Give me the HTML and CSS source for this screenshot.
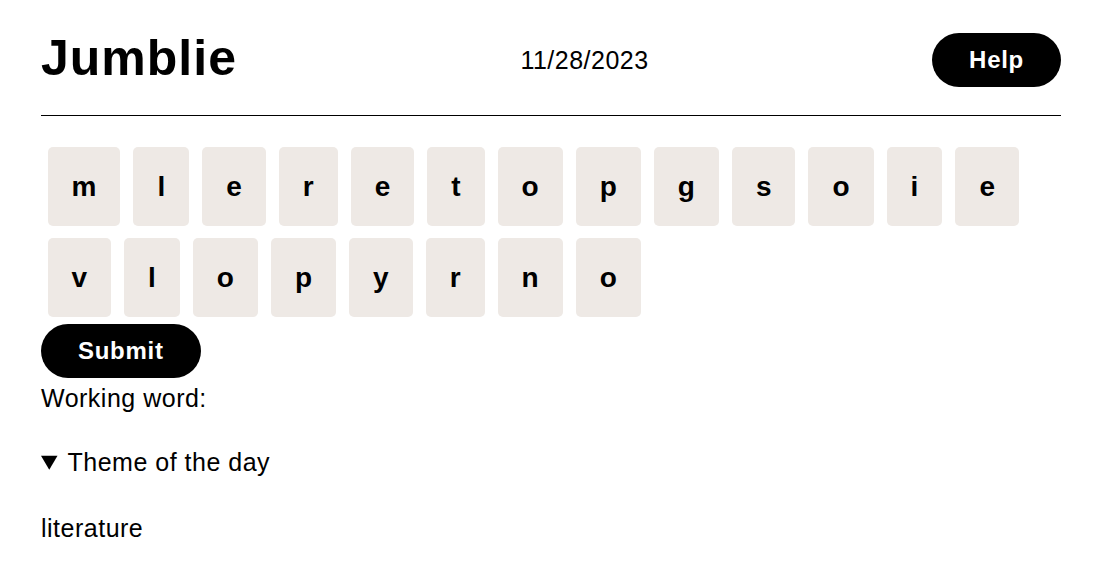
FILE: index.html
```html
<!DOCTYPE html>
<html lang="en">
<head>
<meta charset="utf-8">
<title>Jumblie</title>
<link rel="stylesheet" href="styles.css">
</head>
<body>
<div class="page">
  <header class="header">
    <h1 class="title">Jumblie</h1>
    <div class="date">11/28/2023</div>
    <button class="pill-btn" type="button">Help</button>
  </header>
  <main class="main">
    <div class="tiles">
      <button class="tile" type="button">m</button>
      <button class="tile" type="button">l</button>
      <button class="tile" type="button">e</button>
      <button class="tile" type="button">r</button>
      <button class="tile" type="button">e</button>
      <button class="tile" type="button">t</button>
      <button class="tile" type="button">o</button>
      <button class="tile" type="button">p</button>
      <button class="tile" type="button">g</button>
      <button class="tile" type="button">s</button>
      <button class="tile" type="button">o</button>
      <button class="tile" type="button">i</button>
      <button class="tile" type="button">e</button>
      <button class="tile" type="button">v</button>
      <button class="tile" type="button">l</button>
      <button class="tile" type="button">o</button>
      <button class="tile" type="button">p</button>
      <button class="tile" type="button">y</button>
      <button class="tile" type="button">r</button>
      <button class="tile" type="button">n</button>
      <button class="tile" type="button">o</button>
    </div>
    <button class="pill-btn submit" type="button">Submit</button>
    <div class="working">Working word:</div>
    <details class="theme" open>
      <summary class="theme-summary">Theme of the day</summary>
      <p class="theme-text">literature</p>
    </details>
  </main>
</div>
</body>
</html>
```

FILE: styles.css
```css
html, body {
  margin: 0;
  padding: 0;
  background: #ffffff;
}

body {
  font-family: "Liberation Sans", Arial, Helvetica, sans-serif;
  color: #000000;
  font-size: 25px;
  line-height: 1.44;
}

.page {
  padding: 0 41px;
}

.header {
  display: flex;
  justify-content: space-between;
  align-items: center;
  padding: 31px 0 26px;
  border-bottom: 1px solid #000000;
}

.title {
  margin: 0 0 3px;
  font-size: 50px;
  font-weight: 700;
  line-height: 1.1;
  letter-spacing: 0.02em;
}

.date {
  font-size: 25px;
  line-height: 1.15;
  letter-spacing: 0.02em;
}

.pill-btn {
  font-family: inherit;
  font-size: 24px;
  font-weight: 700;
  line-height: 28px;
  letter-spacing: 0.03em;
  color: #ffffff;
  background: #000000;
  border: none;
  border-radius: 27px;
  padding: 13px 37px;
  margin: 0;
  cursor: pointer;
}

.main {
  padding-top: 25px;
}

.tiles {
  display: flex;
  flex-wrap: wrap;
}

.tile {
  font-family: inherit;
  font-size: 28px;
  font-weight: 700;
  line-height: 32px;
  color: #000000;
  background: #eee9e5;
  border: none;
  border-radius: 5px;
  padding: 23.5px 24px;
  margin: 6px 6.5px;
  cursor: pointer;
}

.submit {
  display: block;
  margin-top: 1px;
}

.working {
  line-height: 36px;
  margin: 2px 0 28px;
  letter-spacing: 0.02em;
}

.theme {
  margin: 0;
  letter-spacing: 0.02em;
}

.theme-summary {
  line-height: 36px;
  cursor: pointer;
}

.theme-text {
  margin: 30px 0 0;
  line-height: 36px;
}
```
